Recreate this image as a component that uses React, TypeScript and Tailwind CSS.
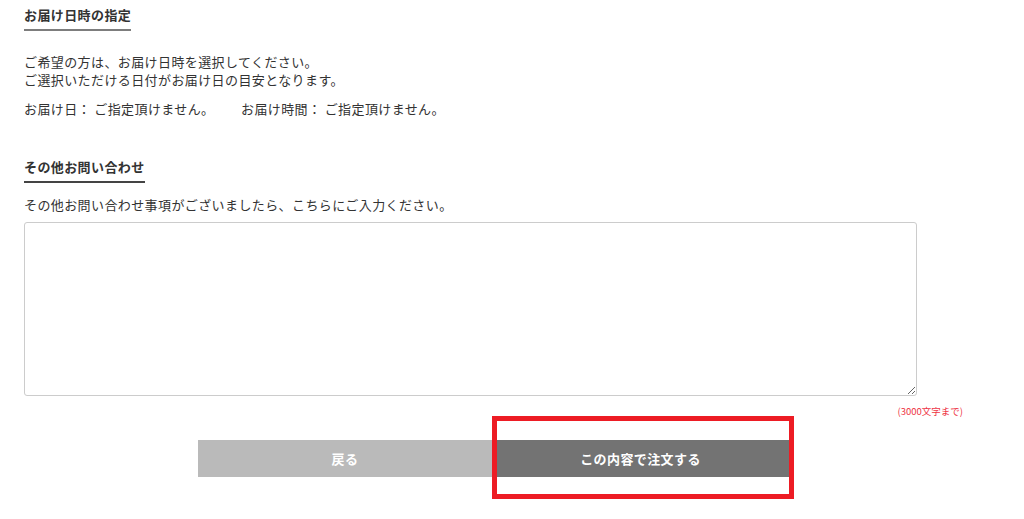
import React from "react";

export default function App() {
  return (
    <div
      className="w-[1024px] h-[519px] bg-white overflow-hidden text-[#333333]"
      style={{ fontFamily: '"Noto Sans CJK JP", "Noto Sans", sans-serif' }}
    >
      <div className="pl-[24px] pt-[6px]">
        <h2 className="block w-fit text-[13px] font-bold leading-[18px] pb-[5px] border-b-2 border-[#7d7d7d] tracking-[0.4px]">
          お届け日時の指定
        </h2>
        <div className="mt-[22px] text-[13px] leading-[18px] tracking-[0.4px]">
          <p>ご希望の方は、お届け日時を選択してください。</p>
          <p>ご選択いただける日付がお届け日の目安となります。</p>
        </div>
        <div className="mt-[11px] flex text-[13px] leading-[18px] tracking-[0.4px]">
          <span className="w-[217px]">お届け日： ご指定頂けません。</span>
          <span>お届け時間： ご指定頂けません。</span>
        </div>
        <h2 className="mt-[40px] block w-fit text-[13px] font-bold leading-[18px] pb-[5px] border-b-2 border-[#444444] tracking-[0.4px]">
          その他お問い合わせ
        </h2>
        <p className="mt-[13px] text-[13px] leading-[18px] tracking-[0.4px]">
          その他お問い合わせ事項がございましたら、こちらにご入力ください。
        </p>
        <textarea className="mt-[8px] block w-[893px] h-[174px] border border-[#cccccc] rounded-[3px] bg-white" />
        <div className="mt-[9px] w-[939px] text-right text-[9.5px] leading-[12px] text-[#ee3344]">
          (3000文字まで)
        </div>
        <div className="mt-[23px] flex pl-[174px]">
          <button className="w-[294px] h-[37px] bg-[#bababa] text-white text-[13px] font-bold tracking-[0.4px]">
            戻る
          </button>
          <div className="relative">
            <button className="w-[297px] h-[37px] bg-[#737373] text-white text-[13px] font-bold tracking-[0.4px]">
              この内容で注文する
            </button>
            <div className="absolute left-0 -right-[5px] -top-[24px] -bottom-[22px] border-[5px] border-[#ed1c24] pointer-events-none" />
          </div>
        </div>
      </div>
    </div>
  );
}
